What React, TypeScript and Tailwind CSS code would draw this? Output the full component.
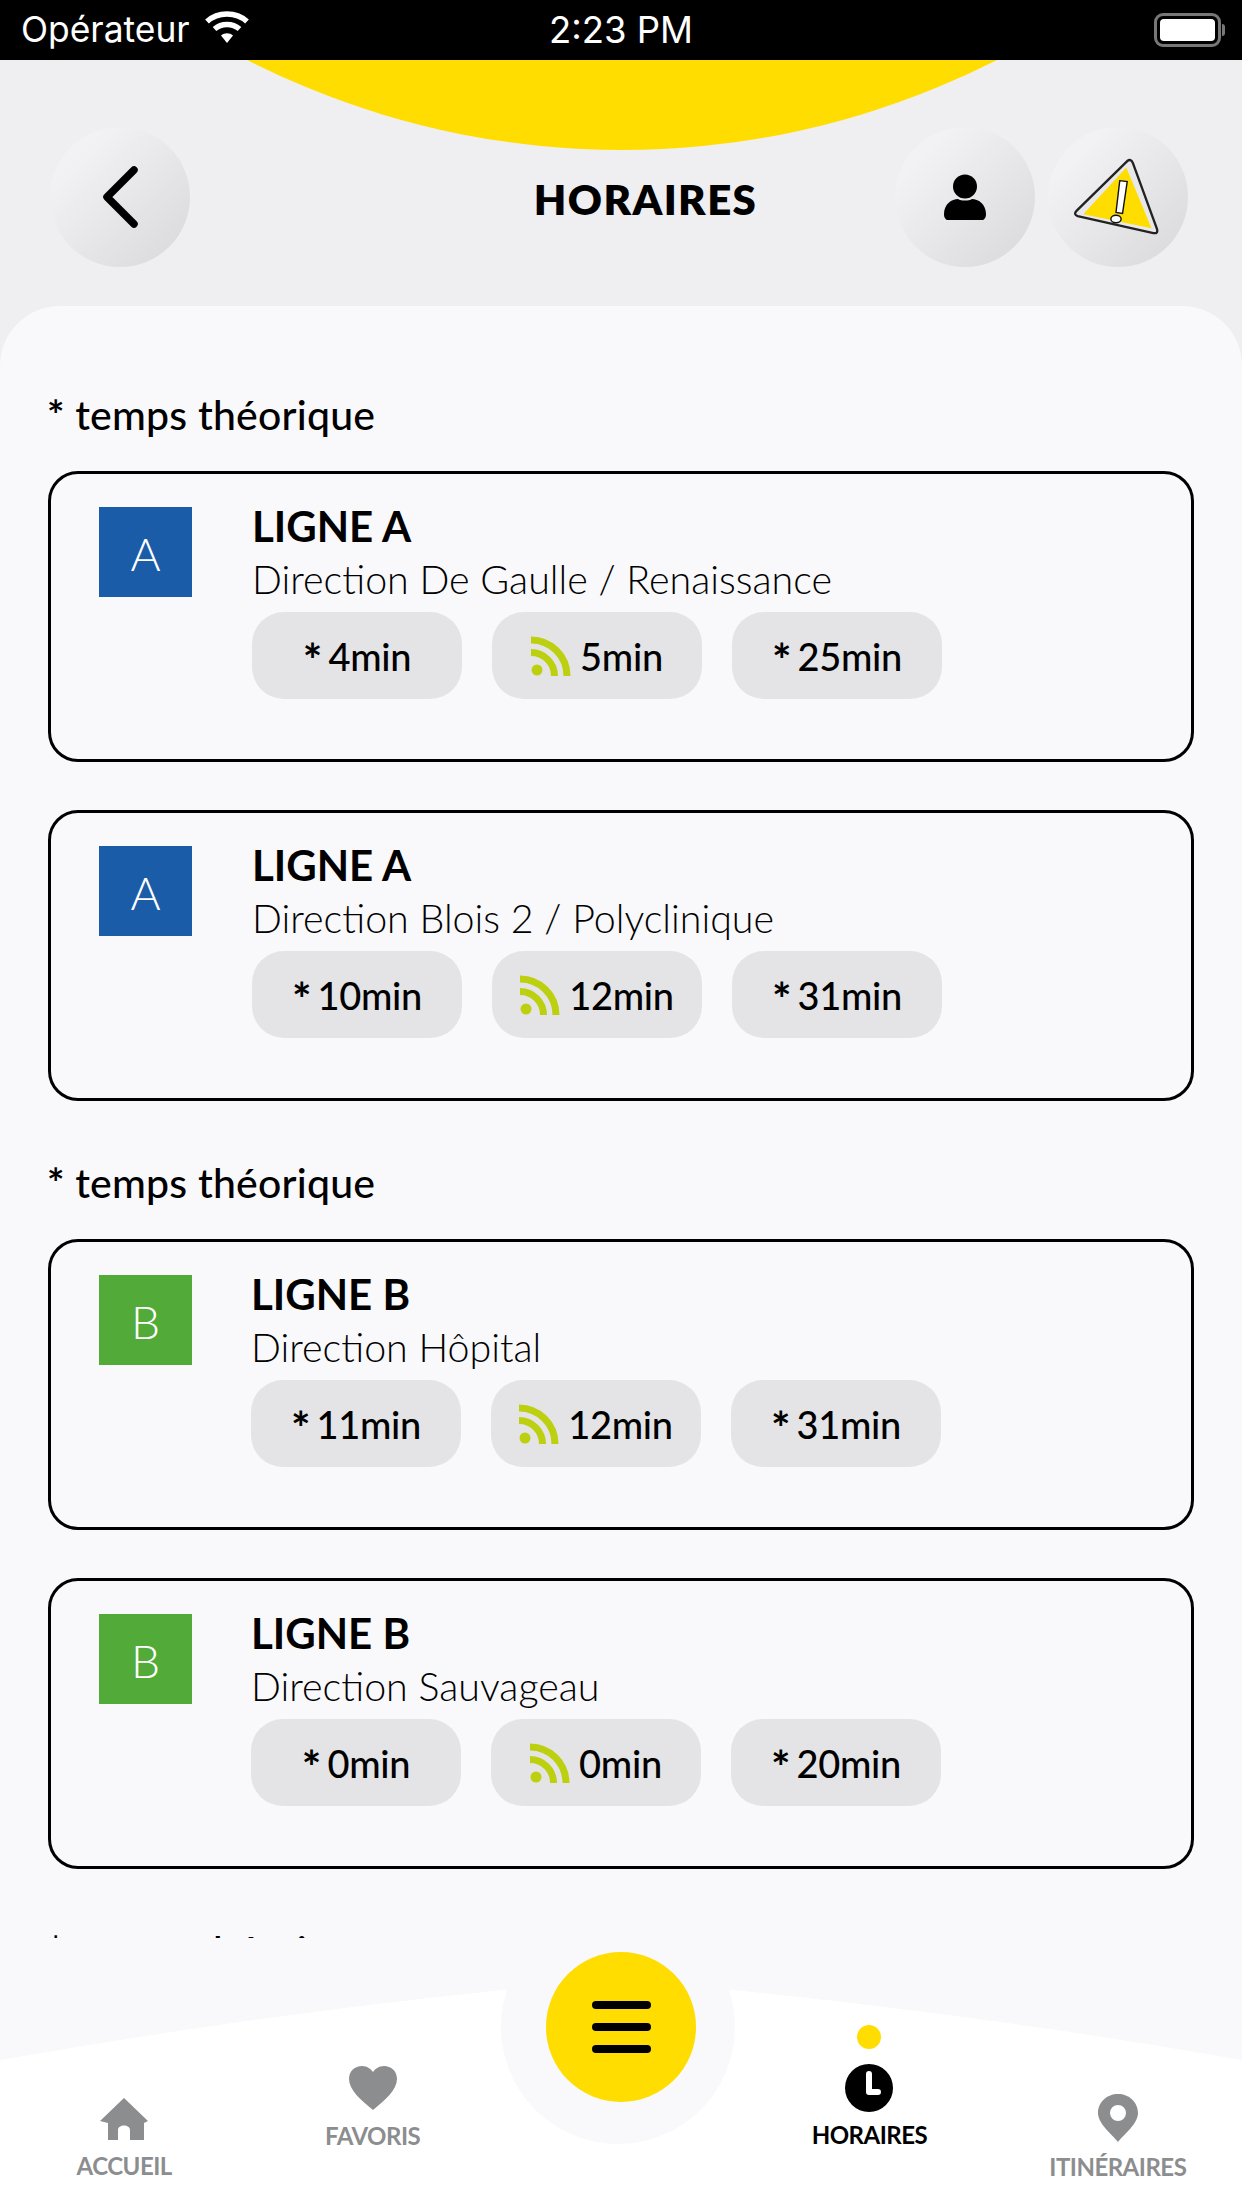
const font = { fontFamily: '"Lato", "Liberation Sans", sans-serif' };

type Chip = { live?: boolean; text: string };
type Line = { badge: string; color: string; title: string; dir: string; chips: Chip[] };

const sections: { shift: boolean; lines: Line[] }[] = [
  {
    shift: false,
    lines: [
      { badge: "A", color: "bg-[#1a5ca8]", title: "LIGNE A", dir: "Direction De Gaulle / Renaissance", chips: [{ text: "4min" }, { live: true, text: "5min" }, { text: "25min" }] },
      { badge: "A", color: "bg-[#1a5ca8]", title: "LIGNE A", dir: "Direction Blois 2 / Polyclinique", chips: [{ text: "10min" }, { live: true, text: "12min" }, { text: "31min" }] },
    ],
  },
  {
    shift: true,
    lines: [
      { badge: "B", color: "bg-[#52aa38]", title: "LIGNE B", dir: "Direction Hôpital", chips: [{ text: "11min" }, { live: true, text: "12min" }, { text: "31min" }] },
      { badge: "B", color: "bg-[#52aa38]", title: "LIGNE B", dir: "Direction Sauvageau", chips: [{ text: "0min" }, { live: true, text: "0min" }, { text: "20min" }] },
    ],
  },
];

function Rss() {
  return (
    <svg width="40" height="40" viewBox="0 0 40 40" fill="none" className="mr-[3px] shrink-0">
      <circle cx="6" cy="34" r="5.5" fill="#bcd00f" />
      <path d="M0 16.5A23.5 23.5 0 0 1 23.5 40" stroke="#bcd00f" strokeWidth="7" />
      <path d="M0 4A36 36 0 0 1 36 40" stroke="#bcd00f" strokeWidth="7" />
    </svg>
  );
}

function TimeChip({ chip }: { chip: Chip }) {
  return (
    <div className="flex h-[87px] w-[210px] items-center justify-center gap-[6px] rounded-[32px] bg-[#e4e4e6] text-[38px] font-medium text-black">
      {chip.live ? <Rss /> : <span className="mt-[8px] text-[46px] font-bold leading-none">*</span>}
      <span className="pt-[2px] tracking-[-0.3px]">{chip.text}</span>
    </div>
  );
}

function Card({ line, shift }: { line: Line; shift: boolean }) {
  return (
    <div className="flex h-[291px] w-[1146px] rounded-[30px] border-[3px] border-black pl-[48px] pt-[33px]">
      <div className={`flex h-[90px] w-[93px] items-center justify-center pt-[3px] text-[46px] font-light text-white ${line.color}`}>
        {line.badge}
      </div>
      <div className={`flex flex-col ${shift ? "ml-[59px]" : "ml-[60px]"}`}>
        <div className="mt-[-6px] h-[50px] text-[42px] font-bold leading-[50px] text-black">{line.title}</div>
        <div className="mt-[3px] h-[50px] text-[39.4px] font-light leading-[50px] text-black">{line.dir}</div>
        <div className="mt-[8px] flex gap-[30px]">
          {line.chips.map((c, i) => (
            <TimeChip key={i} chip={c} />
          ))}
        </div>
      </div>
    </div>
  );
}

function Heading() {
  return (
    <div className="ml-[-1px] h-[50px] text-[41px] font-medium leading-[50px] tracking-[0.2px] text-black">
      <span className="font-bold">*</span> temps théorique
    </div>
  );
}

function RoundButton({ children }: { children: React.ReactNode }) {
  return (
    <div className="flex h-[140px] w-[140px] items-center justify-center rounded-full bg-gradient-to-br from-[#f2f2f4] from-20% to-[#d8d8da]">
      {children}
    </div>
  );
}

function StatusBar() {
  return (
    <div className="flex h-[60px] shrink-0 items-center bg-black pl-[21px] pr-[17px] text-white" style={{ fontFamily: '"Inter", "Liberation Sans", sans-serif' }}>
      <div className="flex w-[525px] items-center">
        <span className="text-[35.4px] leading-none">Opérateur</span>
        <svg width="46" height="34" viewBox="0 0 46 34" fill="none" className="ml-[14px] mt-[-6px]">
          <path d="M3 11.5C14 1.5 32 1.5 43 11.5" stroke="#fff" strokeWidth="5.5" />
          <path d="M10.5 19C17.5 13 28.5 13 35.5 19" stroke="#fff" strokeWidth="5.5" />
          <path d="M17 25.5C20.5 22.5 25.5 22.5 29 25.5L23 33Z" fill="#fff" />
        </svg>
      </div>
      <span className="w-[150px] text-center text-[36.5px] leading-none">2:23 PM</span>
      <div className="ml-auto flex items-center">
        <div className="h-[34px] w-[67px] rounded-[9px] border-[3px] border-[#777] p-[3px]">
          <div className="h-full w-full rounded-[4px] bg-white" />
        </div>
        <div className="ml-[1px] h-[12px] w-[3px] rounded-r-full bg-[#777]" />
      </div>
    </div>
  );
}

function Header() {
  return (
    <div className="relative flex h-[246px] shrink-0 items-start overflow-hidden bg-[#efeff1] pl-[50px] pr-[54px] pt-[67px]" style={font}>
      <div className="absolute left-[-204px] top-[-1562px] h-[1652px] w-[1652px] rounded-full bg-[#ffdd00]" />
      <div className="relative flex w-full items-start">
        <RoundButton>
          <svg width="40" height="64" viewBox="0 0 40 64" fill="none">
            <path d="M34 5L7 32L34 59" stroke="#000" strokeWidth="7.5" strokeLinecap="round" strokeLinejoin="round" />
          </svg>
        </RoundButton>
        <div className="flex h-[140px] w-[705px] items-center justify-center pl-[206px] pt-[4px] text-[42px] font-extrabold tracking-[1.4px] text-black">
          HORAIRES
        </div>
        <RoundButton>
          <svg width="44" height="46" viewBox="0 0 44 46" fill="#000">
            <circle cx="22" cy="12.5" r="12" />
            <path d="M1 40C1 30 9 25 15 25C18 27 26 27 29 25C35 25 43 30 43 40C43 44 41 46 39 46H5C3 46 1 44 1 40Z" />
          </svg>
        </RoundButton>
        <div className="ml-[13px]">
          <RoundButton>
            <svg width="86" height="79" viewBox="0 0 92 84" fill="none" className="mr-[4px]">
              <path d="M58 3Q62 0 64 5L90 76Q91 81 86 80L5 62Q0 60 4 56Z" fill="#e8e8ea" stroke="#222" strokeWidth="2.5" strokeLinejoin="round" />
              <path d="M57 10L84 75L11 60Z" fill="#ffdd00" />
              <path d="M50 24L58 25L53 59L46 58Z" fill="#fff" stroke="#111" strokeWidth="1.5" />
              <ellipse cx="46" cy="65" rx="5.5" ry="4" fill="#fff" stroke="#111" strokeWidth="1.5" />
            </svg>
          </RoundButton>
        </div>
      </div>
    </div>
  );
}

const Gray = "#8c8d8f";

function NavItem({ label, top, active, children }: { label: string; top: string; active?: boolean; children: React.ReactNode }) {
  return (
    <div className={`flex flex-col items-center ${top}`}>
      {children}
      <span className={`mt-[11px] text-[24px] font-bold leading-[30px] tracking-[-0.5px] ${active ? "text-black" : "text-[#8c8d8f]"}`}>{label}</span>
    </div>
  );
}

function BottomNav() {
  return (
    <div className="relative h-[270px] shrink-0 bg-[#f9f9fb]" style={font}>
      <svg className="absolute inset-0" width="1242" height="270" viewBox="0 0 1242 270">
        <path d="M0 122Q250 78 503 52H733Q992 78 1242 122V270H0Z" fill="#fff" />
        <circle cx="618" cy="89" r="117" fill="#f9f9fb" />
      </svg>
      <div className="absolute left-[546px] top-[14px] flex h-[150px] w-[150px] flex-col items-center justify-center gap-[14px] rounded-full bg-[#ffdd00]">
        <div className="h-[8px] w-[59px] rounded-full bg-black" />
        <div className="h-[8px] w-[59px] rounded-full bg-black" />
        <div className="h-[8px] w-[59px] rounded-full bg-black" />
      </div>
      <div className="relative grid h-full grid-cols-5">
        <NavItem label="ACCUEIL" top="pt-[160px]">
          <svg width="48" height="42" viewBox="0 0 48 42" fill={Gray}>
            <path d="M24 0L48 23L44 25V42H30V32C30 26 18 26 18 32V42H8V25L0 23Z" />
          </svg>
        </NavItem>
        <NavItem label="FAVORIS" top="pt-[128px]">
          <svg width="48" height="44" viewBox="0 0 48 44" fill={Gray}>
            <path d="M24 44C12 34 0 24 0 13C0 5 6 0 13 0C18 0 22 3 24 6C26 3 30 0 35 0C42 0 48 5 48 13C48 24 36 34 24 44Z" />
          </svg>
        </NavItem>
        <div />
        <NavItem label="HORAIRES" top="pt-[87px]" active>
          <div className="mb-[15px] h-[24px] w-[24px] rounded-full bg-[#ffdd00]" />
          <svg width="48" height="48" viewBox="0 0 48 48" className="mb-[-3px]">
            <circle cx="24" cy="24" r="24" fill="#000" />
            <path d="M24 10V28H33" stroke="#fff" strokeWidth="6" fill="none" strokeLinecap="round" strokeLinejoin="round" />
          </svg>
        </NavItem>
        <NavItem label="ITINÉRAIRES" top="pt-[156px]">
          <svg width="40" height="48" viewBox="0 0 40 48" className="mb-[-1px]">
            <path fillRule="evenodd" fill={Gray} d="M20 48C14 40 0 30 0 19C0 8 9 0 20 0C31 0 40 8 40 19C40 30 26 40 20 48ZM20 11A8 8 0 1 0 20 27A8 8 0 1 0 20 11Z" />
          </svg>
        </NavItem>
      </div>
    </div>
  );
}

export default function App() {
  return (
    <div className="flex h-[2208px] w-[1242px] flex-col overflow-hidden bg-[#efeff1]">
      <StatusBar />
      <Header />
      <div className="h-[1632px] shrink-0 overflow-hidden rounded-t-[60px] bg-[#f9f9fb] px-[48px] pt-[84px]" style={font}>
        {[...sections, { shift: false, lines: [] as Line[] }].map((s, i) => (
          <div key={i} className={i > 0 ? "mt-[57px]" : ""}>
            <Heading />
            <div className="mt-[31px] flex flex-col gap-[48px]">
              {s.lines.map((l, j) => (
                <Card key={j} line={l} shift={s.shift} />
              ))}
            </div>
          </div>
        ))}
      </div>
      <BottomNav />
    </div>
  );
}
